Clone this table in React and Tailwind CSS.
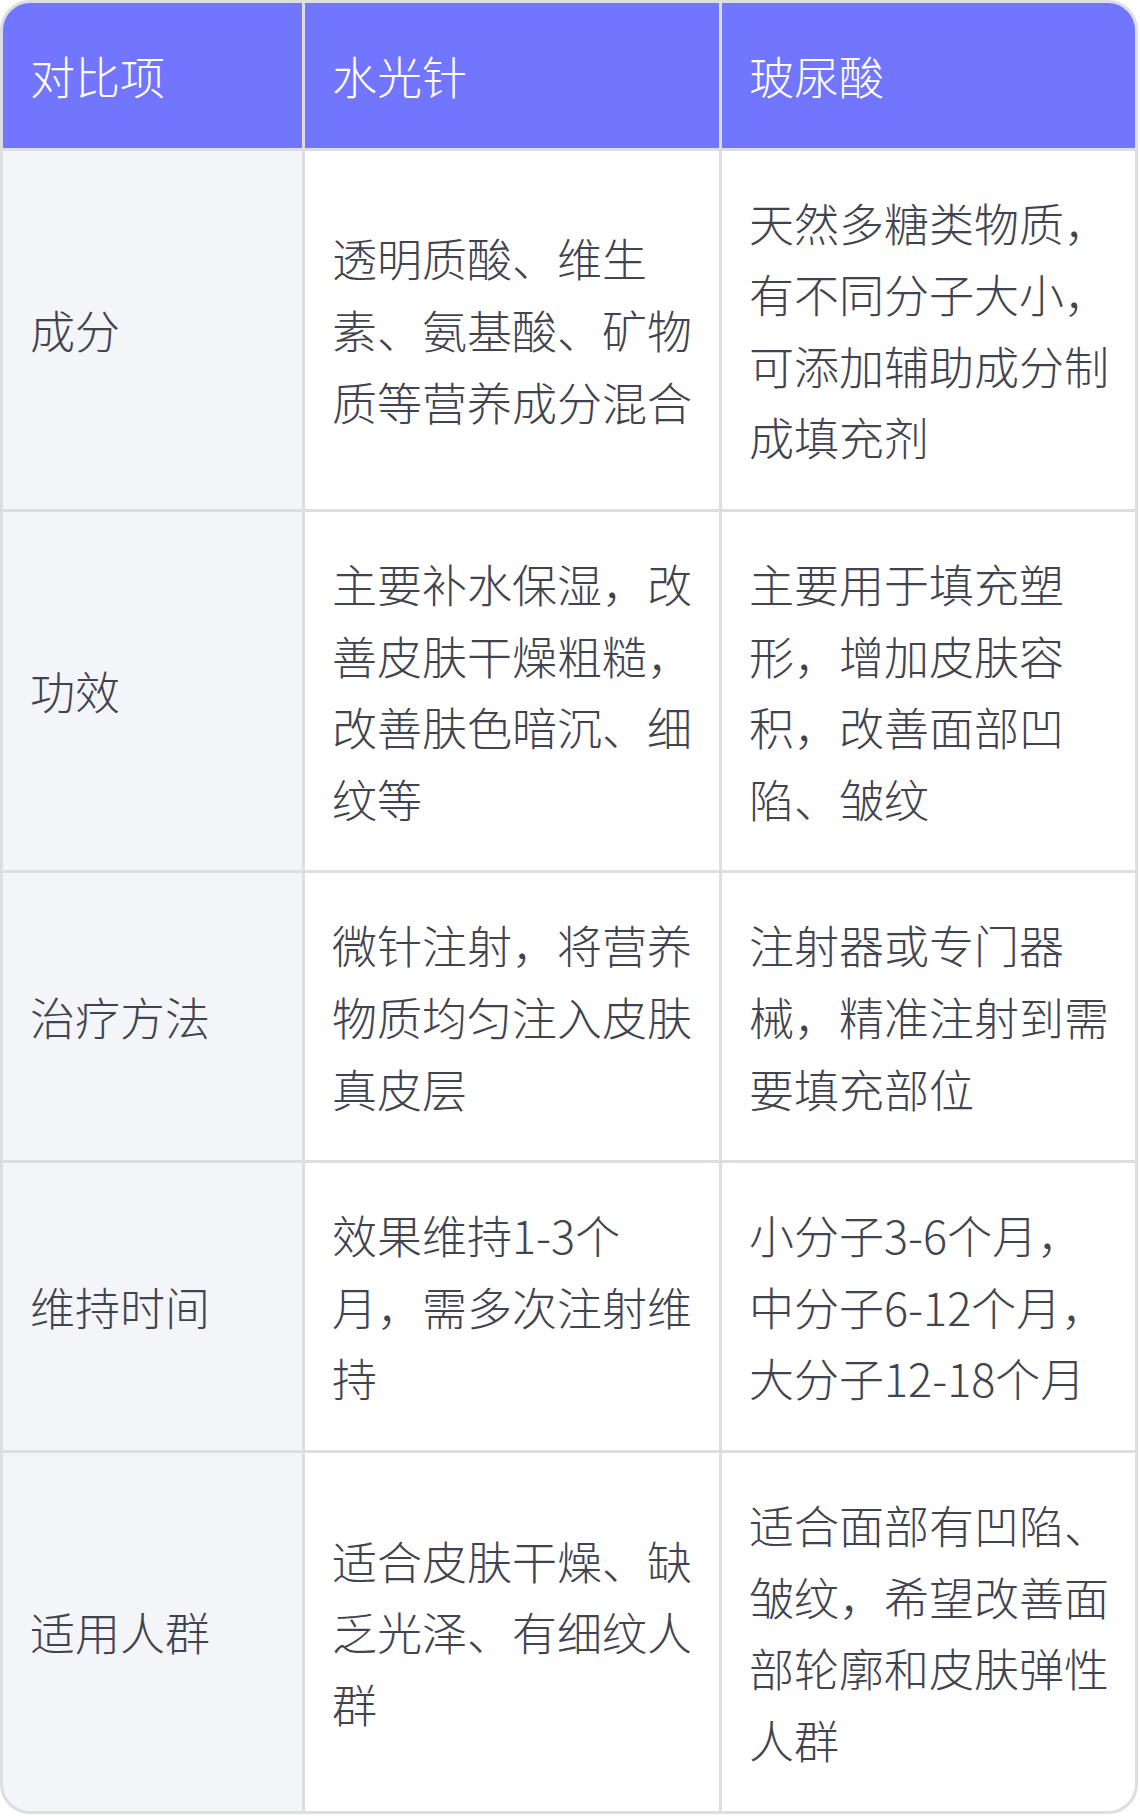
const HEAD = ["对比项", "水光针", "玻尿酸"];

const ROWS = [
  [
    "成分",
    "透明质酸、维生素、氨基酸、矿物质等营养成分混合",
    "天然多糖类物质，有不同分子大小，可添加辅助成分制成填充剂",
  ],
  [
    "功效",
    "主要补水保湿，改善皮肤干燥粗糙，改善肤色暗沉、细纹等",
    "主要用于填充塑形，增加皮肤容积，改善面部凹陷、皱纹",
  ],
  [
    "治疗方法",
    "微针注射，将营养物质均匀注入皮肤真皮层",
    "注射器或专门器械，精准注射到需要填充部位",
  ],
  [
    "维持时间",
    "效果维持1-3个月，需多次注射维持",
    "小分子3-6个月，中分子6-12个月，大分子12-18个月",
  ],
  [
    "适用人群",
    "适合皮肤干燥、缺乏光泽、有细纹人群",
    "适合面部有凹陷、皱纹，希望改善面部轮廓和皮肤弹性人群",
  ],
];

const font = { fontFamily: '"Noto Sans CJK SC", "Noto Sans", sans-serif' };

export default function App() {
  return (
    <div className="bg-white w-[1140px]" style={font}>
      <div className="w-[1138px] border-[3px] border-[#dddee4] rounded-[30px] overflow-hidden bg-[#dddee4]">
        <div className="grid grid-cols-[299px_414px_413px] gap-[3px]">
          {HEAD.map((h) => (
            <div
              key={h}
              className="bg-[#7276ff] text-white text-[45px] leading-[71.6px] font-extralight pl-[27px] pr-[20px] pt-[37px] pb-[36px]"
            >
              {h}
            </div>
          ))}
          {ROWS.map((row) =>
            row.map((cell, i) => (
              <div
                key={row[0] + i}
                className={
                  (i === 0 ? "bg-[#f4f5f9] " : "bg-white ") +
                  "flex items-center text-[#41444f] text-[45px] leading-[71.6px] font-extralight pl-[27px] pr-[20px] py-[36px]"
                }
              >
                <div>{cell}</div>
              </div>
            ))
          )}
        </div>
      </div>
    </div>
  );
}
